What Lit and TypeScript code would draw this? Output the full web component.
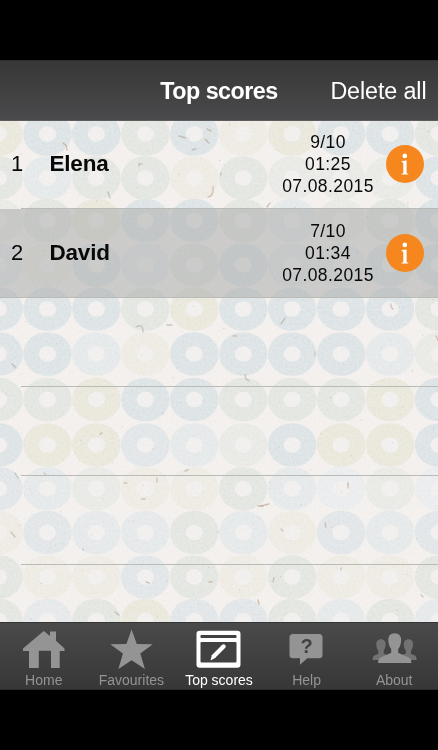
import { LitElement, html, css, svg } from "lit";
import { customElement, property } from "lit/decorators.js";

interface Score {
  rank: number;
  name: string;
  lines: string[];
  shaded?: boolean;
}

const SCORES: Score[] = [
  { rank: 1, name: "Elena", lines: ["9/10", "01:25", "07.08.2015"] },
  { rank: 2, name: "David", lines: ["7/10", "01:34", "07.08.2015"], shaded: true },
];

const RINGS = [
  "YBBGByYBBG",
  "GbGGyGgggB",
  "gGYBBGbgGB",
  "byBbGBbbBB",
  "BBBGYBBBBG",
  "BBbyBBBBbg",
  "GGYBBGGGYB",
  "BYYCbgBYYB",
  "CbgyyGblgl",
  "yCbbGbyCbC",
  "GyyCGyGyyG",
  "GbGYCCGbGb",
];
const RING_Y = [13, 57, 99.5, 144, 188, 233, 278.5, 324, 367.7, 411.5, 456, 499.5];
const TINT: Record<string, string> = {
  B: "#dfe5e7",
  C: "#e3e7e9",
  b: "#e7eaeb",
  l: "#ecedee",
  G: "#e5e7e3",
  g: "#eaebe7",
  Y: "#ebe9dd",
  y: "#efece5",
};

const FIBRES = [
  "M63 22q4 2 4 7", "M179 15l7 2", "M192 29l4-1", "M205 18l4 4", "M140 43h2", "M108 71l2 6", "M208 76q6-1 5-10",
  "M136 206q7-4 7 5", "M167 204h5", "M139 43v2", "M285 197l-4 6", "M391 183v3l2 2", "M436 215l3 6", "M12 243l4 4",
  "M245 254l1 4 3 2", "M233 215h3", "M315 231v3", "M267 86l3-4", "M207 8l4 2", "M15 352l3 5", "M100 313l2-1",
  "M44 352l2 2", "M124 362h3", "M157 357v4", "M142 378h3", "M83 428v1", "M11 411l4 5", "M348 362v5",
  "M258 385h5", "M273 461l1-4", "M258 479l1 4", "M341 447v2", "M146 461l3 1", "M209 461h3", "M115 491l4 3",
  "M421 474l2 2", "M325 402l1 4", "M281 408l2 2", "M185 350l3-1", "M261 385l8-2", "M221 52v2",
];
const SPECKS = Array.from({ length: 110 }, (_, i) => [(i * 137.5 + 21) % 438, (i * 91.7 + 33) % 501]);

const ICONS = {
  home: svg`<path fill="#949494" d="M23 18.500 43.700 1l6.300 5V1.500h6v9.300L64.500 18.500V21h-4.800v17H51V20.700H38.800V38H29V21h-6z"/>`,
  star: svg`<path fill="#949494" d="m43.600-.600 5.200 14.600 15.900.200-12.400 9.400 4.600 15.300-13.300-8.600-13.200 8.600 4.500-15.300-12.600-9.400 16.100-.200z"/>`,
  scores: svg`<rect x="21.500" y=".800" width="44" height="37" rx="3.300" fill="#fff"/><rect x="25.500" y="5" width="36" height="3" rx=".800" fill="#414142"/><rect x="25.500" y="12" width="36" height="20.500" rx="1" fill="#414142"/><path fill="#fff" d="m35.500 30.600 1.300-5.300L47.200 14.800q1.500-1.300 3 .200 1.300 1.400.100 2.800L40.100 28z"/>`,
  help: svg`<path fill="#949494" d="M30 4h26q3.500 0 3.500 3.500v17.300q0 3.500-3.500 3.500H44.300l-7.300 6.500v-6.500H30q-3.500 0-3.500-3.500V7.500Q26.500 4 30 4z"/><text x="43.500" y="22.800" text-anchor="middle" font-family="Liberation Sans, sans-serif" font-weight="700" font-size="20" fill="#424243">?</text>`,
  about: svg`<g fill="#727273"><path d="M30 9.300c3.200 0 4.900 2.300 4.700 5.500-.1 2.600-1 4.700-2 5.900v2.800l5 2v4.500H21.700c0-3 .3-4 2.400-4.700l3.200-1.500v-3.100c-1.100-1.300-1.900-3.300-2-5.900-.2-3.200 1.500-5.500 4.700-5.500z"/><path d="M57.500 9.300c-3.200 0-4.900 2.300-4.700 5.500.1 2.600 1 4.700 2 5.900v2.800l-5 2v4.500h15.800c0-3-.3-4-2.400-4.700L60 23.800v-3.100c1.100-1.300 1.900-3.300 2-5.900.2-3.200-1.300-5.500-4.500-5.500z"/></g><path fill="#949494" d="M43.700 3.300c4.400 0 6.700 3.100 6.400 7.500-.2 3.500-1.300 6.400-2.900 8.200v3.800l9.500 4.200c3 1.300 3.600 2.500 3.600 6H27.200c0-3.500.6-4.700 3.600-6l9.400-4.200V19c-1.500-1.800-2.700-4.700-2.900-8.200-.3-4.400 2-7.500 6.400-7.500z"/>`,
};

const TABS: { label: string; icon: keyof typeof ICONS; active?: boolean }[] = [
  { label: "Home", icon: "home" },
  { label: "Favourites", icon: "star" },
  { label: "Top scores", icon: "scores", active: true },
  { label: "Help", icon: "help" },
  { label: "About", icon: "about" },
];

@customElement("paper-backdrop")
export class PaperBackdrop extends LitElement {
  static styles = css`
    :host { display: block; }
    svg { display: block; width: 100%; height: 100%; }
    .grain { mix-blend-mode: soft-light; }
  `;
  render() {
    return html`<svg viewBox="0 0 438 501" preserveAspectRatio="none" aria-hidden="true">
      <defs>
        <filter id="grain" x="0" y="0" width="100%" height="100%" color-interpolation-filters="sRGB">
          <feTurbulence type="fractalNoise" baseFrequency="0.42" numOctaves="3" seed="8" />
          <feColorMatrix values="0.4 0 0 0 0.31  0.4 0 0 0 0.31  0.4 0 0 0 0.31  0 0 0 0 1" />
        </filter>
      </defs>
      <rect width="438" height="501" fill="#f3f0ee" />
      ${RINGS.map((row, r) =>
        [...row].map((c, i) => svg`<ellipse cx=${-1.5 + i * 48.95} cy=${RING_Y[r]} rx="24.300" ry="21.800" fill=${TINT[c]} />
          <ellipse cx=${-1.5 + i * 48.95} cy=${RING_Y[r]} rx="8.500" ry="7.800" fill="#f2f0ef" />`)
      )}
      ${SPECKS.map(([x, y]) => svg`<circle cx=${x} cy=${y} r=".600" fill="#aaa196" opacity=".45" />`)}
      ${FIBRES.map((d, i) => svg`<path d=${d} fill="none" stroke=${i % 3 ? "#a9a49b" : "#b89b80"} stroke-width="1.400" stroke-linecap="round" opacity=".55" />`)}
      <rect class="grain" width="438" height="501" filter="url(#grain)" />
    </svg>`;
  }
}

@customElement("score-row")
export class ScoreRow extends LitElement {
  @property({ attribute: false }) score?: Score;

  static styles = css`
    :host { display: block; height: 89px; box-sizing: border-box; color: #080808; }
    .row { height: 88px; display: grid; grid-template-columns: 49.500px 1fr 120px 50px; align-items: center; }
    .shaded { background: rgba(170, 171, 171, 0.54); }
    .line { height: 1px; margin-left: 21px; background: #b9bbb7; }
    .shaded + .line { margin-left: 0; }
    .rank { padding-left: 11px; font-size: 22px; line-height: 26px; }
    .name { font-size: 22.500px; line-height: 26px; font-weight: 700; letter-spacing: -0.200px; }
    .stats { text-align: center; font-size: 17.500px; line-height: 22px; letter-spacing: 0.400px; padding-bottom: 1px; }
    .info { width: 38px; height: 38px; display: block; margin-left: -2px; }
  `;
  render() {
    const s = this.score;
    return html`<div class="row ${s?.shaded ? "shaded" : ""}">
        ${s
          ? html`<div class="rank">${s.rank}</div>
              <div class="name">${s.name}</div>
              <div class="stats">${s.lines.map((l) => html`<div>${l}</div>`)}</div>
              <svg class="info" viewBox="0 0 38 38">
                <circle cx="19" cy="19" r="19" fill="#f6871f" />
                <circle cx="18.800" cy="10.900" r="2.300" fill="#fff" />
                <path fill="#fff" d="M15.700 16l4.900-.6v11.900q0 1.300 1.100 1.400l.6.100v.8h-6.800v-.8l.7-.1q1.100-.2 1.100-1.400v-8.400q0-1.400-1-1.600l-.6-.2z" />
              </svg>`
          : ""}
      </div>
      <div class="line"></div>`;
  }
}

@customElement("app-root")
export class AppRoot extends LitElement {
  static styles = css`
    :host {
      display: flex; flex-direction: column; height: 750px; box-sizing: border-box; padding: 60px 0;
      background: #000; font-family: "Liberation Sans", Arial, sans-serif; overflow: hidden;
    }
    .bar {
      height: 61px; box-sizing: border-box; flex: none; display: grid; grid-template-columns: 1fr 118px 1fr; align-items: center;
      color: #fff; background: linear-gradient(#373737, #4a4a4c); border-top: 1px solid #303030; border-bottom: 1px solid #5d5d5d;
      white-space: nowrap; padding-top: 2px;
    }
    .title { grid-column: 2; font-size: 23.300px; font-weight: 700; letter-spacing: -0.500px; text-align: center; }
    .delete { font-size: 23.300px; letter-spacing: -0.100px; text-align: right; padding-right: 11.500px; }
    .list { position: relative; flex: 1; overflow: hidden; }
    .backdrop { position: absolute; inset: 0; }
    .rows { position: relative; margin-top: -1px; }
    .tabs {
      height: 68px; flex: none; display: grid; grid-template-columns: repeat(5, 1fr); box-sizing: border-box;
      background: linear-gradient(#4a4a4b, #373737); border-top: 1px solid #363535; border-bottom: 1px solid #2b2b2b;
    }
    .tab { display: flex; flex-direction: column; align-items: center; color: #949494; font-size: 14px; line-height: 16px; }
    .tab svg { width: 87px; height: 39px; margin-top: 7px; overflow: visible; flex: none; }
    .label { margin-top: 3px; white-space: nowrap; }
    .active { color: #fff; }
  `;
  render() {
    return html`
      <header class="bar"><div class="title">Top scores</div><div class="delete">Delete all</div></header>
      <main class="list">
        <paper-backdrop class="backdrop"></paper-backdrop>
        <div class="rows">
          ${[0, 1, 2, 3, 4, 5].map((i) => html`<score-row .score=${SCORES[i]}></score-row>`)}
        </div>
      </main>
      <nav class="tabs">
        ${TABS.map((t) => html`<div class="tab ${t.active ? "active" : ""}">
          <svg viewBox="0 0 87 39">${ICONS[t.icon]}</svg><span class="label">${t.label}</span>
        </div>`)}
      </nav>`;
  }
}
